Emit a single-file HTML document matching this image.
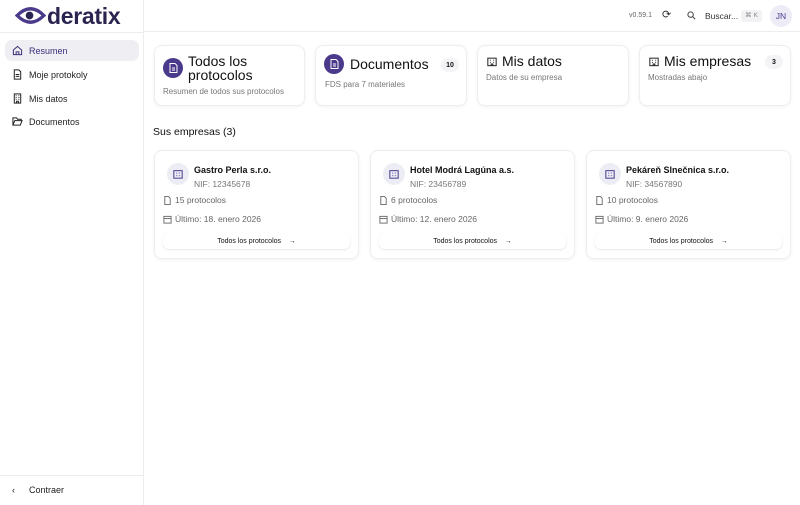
<!DOCTYPE html>
<html><head><meta charset="utf-8"><style>
*{box-sizing:border-box;margin:0;padding:0}
body{width:800px;height:505px;overflow:hidden;background:#fff;font-family:"Liberation Sans",sans-serif;color:#111;position:relative}
.side{position:absolute;left:0;top:0;width:144px;height:505px;border-right:1px solid #ececec}
.hdr{position:absolute;left:144px;top:0;right:0;height:32px;border-bottom:1px solid #ececec}
.logoline{position:absolute;left:0;top:32px;width:144px;border-top:1px solid #ececec}
.nav{position:absolute;left:5px;width:134px;height:21px;border-radius:7px;font-size:9px;display:flex;align-items:center;padding-left:7px;color:#222}
.nav svg{margin-right:6px}
.act{background:#efeff3;color:#3a2f7a}
.card{position:absolute;background:#fff;border:1px solid #eee;border-radius:8px;box-shadow:0 1px 3px rgba(0,0,0,.06)}
.ic{width:20px;height:20px;border-radius:50%;background:#4b3a8c;display:flex;align-items:center;justify-content:center;position:absolute}
.t{position:absolute;font-size:14px;color:#111}
.s{position:absolute;font-size:8px;color:#777}
.badge{position:absolute;width:18px;height:14px;border-radius:7px;background:#f4f4f6;font-size:7px;display:flex;align-items:center;justify-content:center;font-weight:bold}
.co .lg{position:absolute;left:12px;top:12px;width:22px;height:22px;border-radius:50%;background:#ececf4;display:flex;align-items:center;justify-content:center}
.co .n{position:absolute;left:39px;top:14px;font-size:9px;font-weight:bold}
.co .nif{position:absolute;left:39px;top:28px;font-size:8.5px;color:#777}
.co .r{position:absolute;left:8px;font-size:8.5px;color:#666;display:flex;align-items:center}
.co .r svg{margin-right:3px}
.co .b{position:absolute;left:8px;right:8px;top:82px;height:16px;border-radius:6px;box-shadow:0 1px 2px rgba(0,0,0,.1);font-size:7px;display:flex;align-items:center;justify-content:center;color:#111}
</style></head><body>
<div class="side">
 <svg style="position:absolute;left:15px;top:5px" width="31" height="21" viewBox="0 0 32 22"><path d="M2 11 Q16 -3 30 11 Q16 25 2 11Z" fill="none" stroke="#4b3a8c" stroke-width="3.5"/><circle cx="15" cy="11" r="4" fill="#2a2550"/></svg>
 <div style="position:absolute;left:47px;top:3px;font-size:23px;font-weight:bold;color:#2a2550;letter-spacing:-0.3px">deratix</div>
 <div class="nav act" style="top:40px"><svg width="11" height="11" viewBox="0 0 12 12" fill="none" stroke="#3a2f7a" stroke-width="1.1"><path d="M1.5 5.5L6 1.5l4.5 4v5h-9z"/><path d="M4.5 10.5v-3h3v3"/></svg>Resumen</div>
 <div class="nav" style="top:64px"><svg width="11" height="11" viewBox="0 0 12 12" fill="none" stroke="#222" stroke-width="1.1"><path d="M2.5 1h5l2 2v8h-7z"/><path d="M4 6h4M4 8h4"/></svg>Moje protokoly</div>
 <div class="nav" style="top:88px"><svg width="11" height="11" viewBox="0 0 12 12" fill="none" stroke="#222" stroke-width="1.1"><rect x="2.5" y="1" width="7" height="10"/><path d="M4 3h1M7 3h1M4 5h1M7 5h1M4 7h1M7 7h1M5 11V9h2v2"/></svg>Mis datos</div>
 <div class="nav" style="top:111px"><svg width="11" height="11" viewBox="0 0 12 12" fill="none" stroke="#222" stroke-width="1.1"><path d="M1 10V2h4l1 1.5h4V5M1 10l2-5h8l-2 5z"/></svg>Documentos</div>
 <div style="position:absolute;left:0;top:475px;width:143px;border-top:1px solid #ececec"></div>
 <div style="position:absolute;left:12px;top:485px;font-size:9px;color:#222">‹</div>
 <div style="position:absolute;left:29px;top:485px;font-size:9px;color:#222">Contraer</div>
</div>
<div class="logoline"></div>
<div class="hdr">
 <div style="position:absolute;left:485px;top:12px;font-size:7px;color:#666">v0.59.1</div>
 <div style="position:absolute;left:518px;top:8px;font-size:11px;color:#333">⟳</div>
 <svg style="position:absolute;left:543px;top:11px" width="9" height="9" viewBox="0 0 10 10" fill="none" stroke="#444" stroke-width="1.1"><circle cx="4" cy="4" r="3"/><path d="M6.5 6.5L9 9"/></svg>
 <div style="position:absolute;left:561px;top:11px;font-size:8.5px;color:#333">Buscar...</div>
 <div style="position:absolute;left:597px;top:10px;width:21px;height:12px;border-radius:3px;background:#f2f2f4;font-size:6.5px;color:#888;text-align:center;line-height:12px">⌘ K</div>
 <div style="position:absolute;left:626px;top:5px;width:22px;height:22px;border-radius:50%;background:#ecebf6;font-size:8.5px;color:#4b3a8c;text-align:center;line-height:22px">JN</div>
</div>

<div class="card" style="left:154px;top:45px;width:151px;height:61px">
 <div class="ic" style="left:8px;top:12px"><svg width="9" height="10" viewBox="0 0 9 10" fill="none" stroke="#fff" stroke-width="1"><path d="M1 .5h5l2 2v7H1z"/><path d="M3 5h3M3 7h3"/></svg></div>
 <div class="t" style="left:33px;top:8px;line-height:14px">Todos los<br>protocolos</div>
 <div class="s" style="left:8px;top:41px">Resumen de todos sus protocolos</div>
</div>
<div class="card" style="left:315px;top:45px;width:152px;height:61px">
 <div class="ic" style="left:8px;top:8px"><svg width="9" height="10" viewBox="0 0 9 10" fill="none" stroke="#fff" stroke-width="1"><path d="M1 .5h5l2 2v7H1z"/><path d="M3 5h3M3 7h3"/></svg></div>
 <div class="t" style="left:34px;top:10px">Documentos</div>
 <div class="badge" style="left:125px;top:12px">10</div>
 <div class="s" style="left:9px;top:34px">FDS para 7 materiales</div>
</div>
<div class="card" style="left:477px;top:45px;width:152px;height:61px">
 <svg style="position:absolute;left:9px;top:10px" width="10" height="11" viewBox="0 0 12 12" fill="none" stroke="#222" stroke-width="1.2"><rect x="1" y="2" width="10" height="9"/><path d="M3.5 4.5h1M7.5 4.5h1M3.5 7h1M7.5 7h1M5 11V9h2v2"/></svg>
 <div class="t" style="left:24px;top:7px">Mis datos</div>
 <div class="s" style="left:8px;top:27px">Datos de su empresa</div>
</div>
<div class="card" style="left:639px;top:45px;width:152px;height:61px">
 <svg style="position:absolute;left:9px;top:10px" width="10" height="11" viewBox="0 0 12 12" fill="none" stroke="#222" stroke-width="1.2"><rect x="1" y="2" width="10" height="9"/><path d="M3.5 4.5h1M7.5 4.5h1M3.5 7h1M7.5 7h1M5 11V9h2v2"/></svg>
 <div class="t" style="left:24px;top:7px">Mis empresas</div>
 <div class="badge" style="left:125px;top:9px">3</div>
 <div class="s" style="left:8px;top:27px">Mostradas abajo</div>
</div>

<div style="position:absolute;left:153px;top:126px;font-size:10.5px">Sus empresas (3)</div>

<div class="card co" style="left:154px;top:150px;width:205px;height:109px">
 <div class="lg"><svg width="10" height="10" viewBox="0 0 12 12" fill="none" stroke="#4b3a8c" stroke-width="1.2"><rect x="1" y="2" width="10" height="9"/><path d="M4 5h1M7 5h1M4 8h1M7 8h1"/></svg></div>
 <div class="n">Gastro Perla s.r.o.</div><div class="nif">NIF: 12345678</div>
 <div class="r" style="top:44px"><svg width="9" height="9" viewBox="0 0 10 10" fill="none" stroke="#666"><path d="M2 .5h4l2 2v7H2z"/></svg>15 protocolos</div>
 <div class="r" style="top:63px"><svg width="9" height="9" viewBox="0 0 10 10" fill="none" stroke="#666"><rect x="1" y="1.5" width="8" height="7.5"/><path d="M1 4h8"/></svg>Último: 18. enero 2026</div>
 <div class="b">Todos los protocolos&nbsp;&nbsp;&nbsp;&nbsp;→</div>
</div>
<div class="card co" style="left:370px;top:150px;width:205px;height:109px">
 <div class="lg"><svg width="10" height="10" viewBox="0 0 12 12" fill="none" stroke="#4b3a8c" stroke-width="1.2"><rect x="1" y="2" width="10" height="9"/><path d="M4 5h1M7 5h1M4 8h1M7 8h1"/></svg></div>
 <div class="n">Hotel Modrá Lagúna a.s.</div><div class="nif">NIF: 23456789</div>
 <div class="r" style="top:44px"><svg width="9" height="9" viewBox="0 0 10 10" fill="none" stroke="#666"><path d="M2 .5h4l2 2v7H2z"/></svg>6 protocolos</div>
 <div class="r" style="top:63px"><svg width="9" height="9" viewBox="0 0 10 10" fill="none" stroke="#666"><rect x="1" y="1.5" width="8" height="7.5"/><path d="M1 4h8"/></svg>Último: 12. enero 2026</div>
 <div class="b">Todos los protocolos&nbsp;&nbsp;&nbsp;&nbsp;→</div>
</div>
<div class="card co" style="left:586px;top:150px;width:205px;height:109px">
 <div class="lg"><svg width="10" height="10" viewBox="0 0 12 12" fill="none" stroke="#4b3a8c" stroke-width="1.2"><rect x="1" y="2" width="10" height="9"/><path d="M4 5h1M7 5h1M4 8h1M7 8h1"/></svg></div>
 <div class="n">Pekáreň Slnečnica s.r.o.</div><div class="nif">NIF: 34567890</div>
 <div class="r" style="top:44px"><svg width="9" height="9" viewBox="0 0 10 10" fill="none" stroke="#666"><path d="M2 .5h4l2 2v7H2z"/></svg>10 protocolos</div>
 <div class="r" style="top:63px"><svg width="9" height="9" viewBox="0 0 10 10" fill="none" stroke="#666"><rect x="1" y="1.5" width="8" height="7.5"/><path d="M1 4h8"/></svg>Último: 9. enero 2026</div>
 <div class="b">Todos los protocolos&nbsp;&nbsp;&nbsp;&nbsp;→</div>
</div>
</body></html>
